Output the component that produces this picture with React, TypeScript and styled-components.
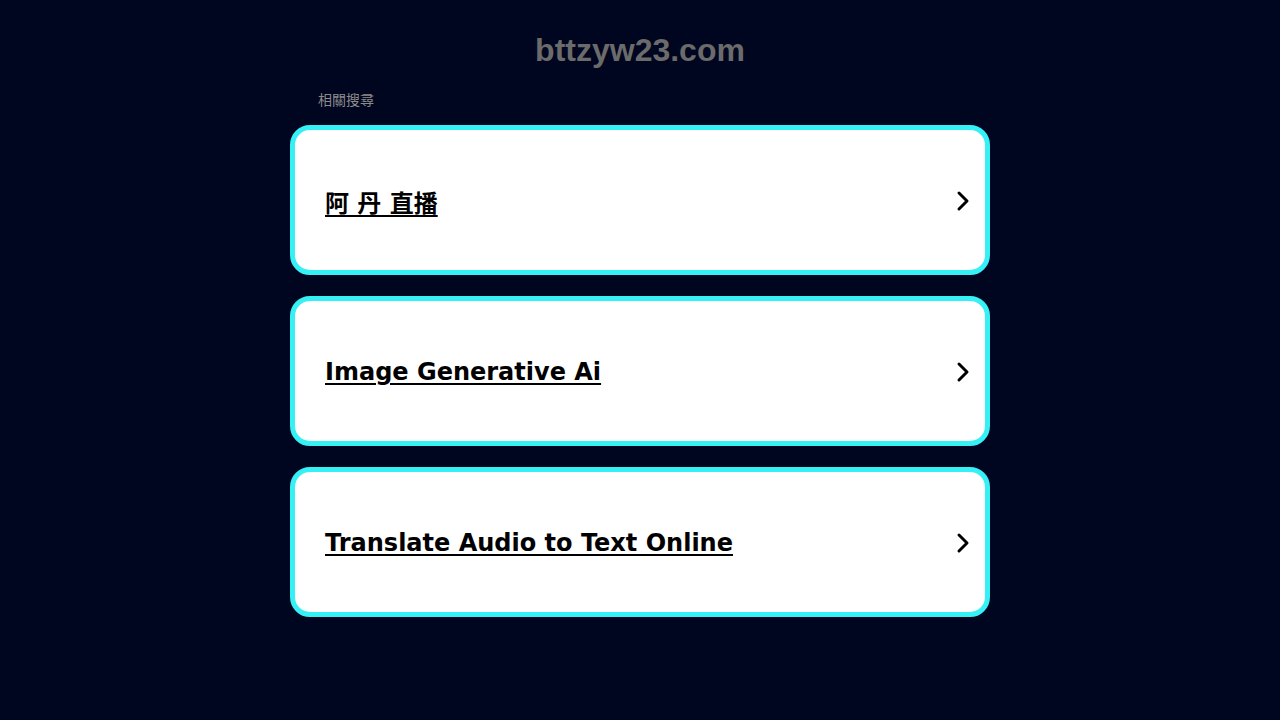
import React from "react";
import styled, { createGlobalStyle } from "styled-components";

const GlobalStyle = createGlobalStyle`
	html, body {
		margin: 0;
		padding: 0;
		background: #000520;
	}
`;

const Page = styled.div`
	min-height: 720px;
	background: #000520;
	display: flex;
	flex-direction: column;
	align-items: center;
	padding-top: 30px;
	box-sizing: border-box;
`;

const Domain = styled.h1`
	margin: 0;
	font-family: "Liberation Sans", Arial, sans-serif;
	font-size: 32px;
	font-weight: 700;
	color: #6b6b6b;
	line-height: 40px;
`;

const Results = styled.section`
	width: 700px;
	margin-top: 20px;
	display: flex;
	flex-direction: column;
`;

const Label = styled.span`
	font-family: "Liberation Sans", "Noto Sans CJK TC", sans-serif;
	font-size: 14px;
	color: #8a8a8a;
	padding-left: 28px;
	line-height: 20px;
	margin-bottom: 15px;
`;

const List = styled.ul`
	list-style: none;
	margin: 0;
	padding: 0;
	display: flex;
	flex-direction: column;
	gap: 21px;
`;

const Card = styled.li`
	height: 150px;
	box-sizing: border-box;
	border: 5px solid #35f0f4;
	border-radius: 20px;
	background: #ffffff;
	display: flex;
	align-items: center;
	justify-content: space-between;
	padding: 2px 14px 0 30px;
`;

const Link = styled.a`
	font-family: "DejaVu Sans", Verdana, "Noto Sans CJK TC", sans-serif;
	font-size: 24px;
	font-weight: 700;
	color: #000;
	text-decoration: underline;
	text-decoration-thickness: 2px;
	text-underline-offset: 3px;
	cursor: pointer;
`;

const Chevron = () => (
	<svg width="16" height="22" viewBox="0 0 16 22" fill="none">
		<path d="M4 3 L12 11 L4 19" stroke="#000" strokeWidth="3" strokeLinecap="round" strokeLinejoin="round" />
	</svg>
);

const items = ["阿 丹 直播", "Image Generative Ai", "Translate Audio to Text Online"];

export default function App() {
	return (
		<>
			<GlobalStyle />
			<Page>
				<Domain>bttzyw23.com</Domain>
				<Results>
					<Label>相關搜尋</Label>
					<List>
						{items.map((t) => (
							<Card key={t}>
								<Link>{t}</Link>
								<Chevron />
							</Card>
						))}
					</List>
				</Results>
			</Page>
		</>
	);
}
